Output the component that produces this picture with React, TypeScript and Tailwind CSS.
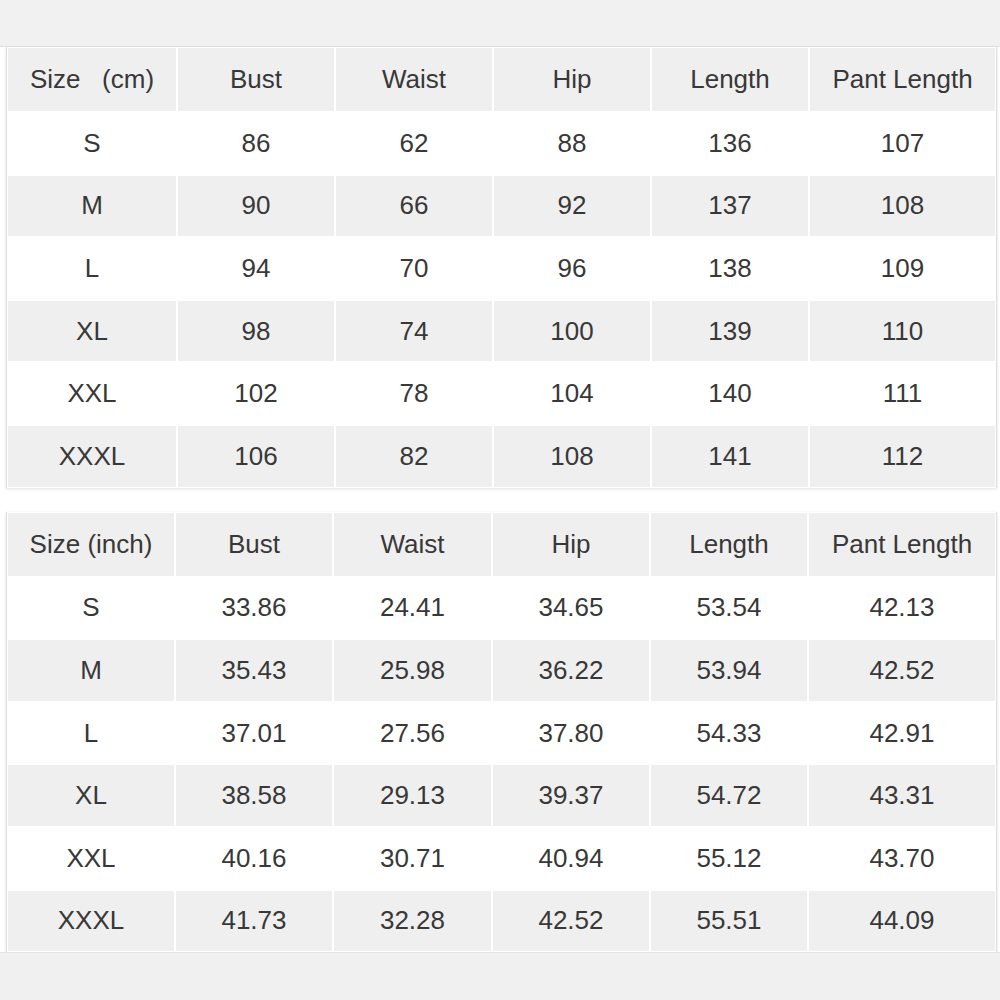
import React from "react";

const headers1 = ["Size\u00a0\u00a0\u00a0(cm)", "Bust", "Waist", "Hip", "Length", "Pant Length"];
const rows1 = [
  ["S", "86", "62", "88", "136", "107"],
  ["M", "90", "66", "92", "137", "108"],
  ["L", "94", "70", "96", "138", "109"],
  ["XL", "98", "74", "100", "139", "110"],
  ["XXL", "102", "78", "104", "140", "111"],
  ["XXXL", "106", "82", "108", "141", "112"],
];
const headers2 = ["Size (inch)", "Bust", "Waist", "Hip", "Length", "Pant Length"];
const rows2 = [
  ["S", "33.86", "24.41", "34.65", "53.54", "42.13"],
  ["M", "35.43", "25.98", "36.22", "53.94", "42.52"],
  ["L", "37.01", "27.56", "37.80", "54.33", "42.91"],
  ["XL", "38.58", "29.13", "39.37", "54.72", "43.31"],
  ["XXL", "40.16", "30.71", "40.94", "55.12", "43.70"],
  ["XXXL", "41.73", "32.28", "42.52", "55.51", "44.09"],
];

function Table({ headers, rows, cols }: { headers: string[]; rows: string[][]; cols: string }) {
  return (
    <div className="ml-[6px] mr-[3px] border-x border-[#dedede] shadow-[0_1px_3px_rgba(0,0,0,0.12)] bg-white">
      <div className={`grid ${cols} gap-[2px] p-[1px] bg-white`}>
        {headers.map((h, i) => (
          <div key={"h" + i} className="h-[63px] bg-[#efefef] flex items-center justify-center whitespace-pre">
            {h}
          </div>
        ))}
        {rows.map((r, ri) =>
          r.map((c, ci) => (
            <div
              key={ri + "-" + ci}
              className={`h-[60.6px] flex items-center justify-center ${ri % 2 === 1 ? "bg-[#efefef]" : "bg-white"}`}
            >
              {c}
            </div>
          ))
        )}
      </div>
    </div>
  );
}

export default function App() {
  return (
    <div
      className="w-[1000px] h-[1000px] bg-white flex flex-col text-[26px] text-[#383838]"
      style={{ fontFamily: '"Liberation Sans", Arial, sans-serif' }}
    >
      <div className="h-[47px] bg-[#f1f1f1] border-b border-[#e2e2e2]" />
      <Table headers={headers1} rows={rows1} cols="grid-cols-[168px_156px_156px_156px_156px_1fr]" />
      <div className="h-[24px]" />
      <Table headers={headers2} rows={rows2} cols="grid-cols-[166px_156px_157px_156px_156px_1fr]" />
      <div className="flex-1 bg-[#f0f0f0] border-t border-[#e4e4e4]" />
    </div>
  );
}
